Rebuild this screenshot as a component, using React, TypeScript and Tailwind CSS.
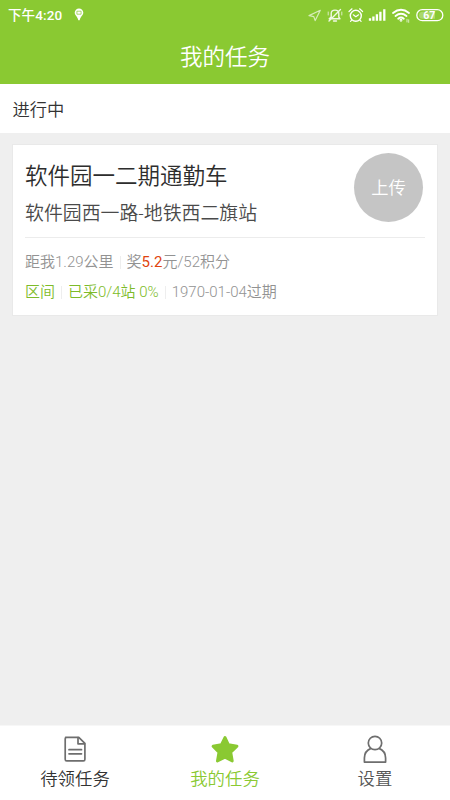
const TABS = [
    { id: "pending", label: "待领任务", color: "text-[#333333]", icon: <DocumentIcon /> },
    { id: "mine", label: "我的任务", color: "text-[#8ac932]", icon: <StarIcon /> },
    { id: "settings", label: "设置", color: "text-[#555555]", icon: <UserIcon /> },
];

function DocumentIcon() {
    return (
        <svg className="w-7 h-7" viewBox="0 0 28 28" fill="none" stroke="#6e6e6e" strokeWidth="1.7" strokeLinejoin="round" strokeLinecap="round">
            <path d="M4.6 2.3H17.8L23.9 8.4V24.2Q23.9 25.9 22.4 25.9H5.7Q4.2 25.9 4.2 24.2V3.8Q4.2 2.3 5.7 2.3" />
            <path d="M17 2.5V8.8H23.5M8 14.7H20.5M8 18.8H20.5" />
        </svg>
    );
}

function StarIcon() {
    return (
        <svg className="w-7 h-7" viewBox="0 0 28 28" fill="#8ac932" stroke="#8ac932" strokeWidth="2.8" strokeLinejoin="round">
            <path d="M14 2.4L17.4 9.6L26 11.2L19.8 17.2L21.3 26L14 22.2L6.4 26L7.9 17.2L2 11.2L10.4 9.6Z" />
        </svg>
    );
}

function UserIcon() {
    return (
        <svg className="w-7 h-7" viewBox="0 0 28 28" fill="none" stroke="#6e6e6e" strokeWidth="1.7" strokeLinejoin="round">
            <circle cx="14" cy="8" r="6.7" />
            <path d="M10 13.4C6 15 3.4 18.4 3.4 23V27.1H24.6V23C24.6 18.4 22 15 18 13.4" />
        </svg>
    );
}

function StatusBar() {
    return (
        <div className="h-[30px] flex items-center text-white">
            <span className="ml-2 w-[56px] text-[13.5px] leading-[30px] font-medium tracking-[0.1px] whitespace-nowrap">下午4:20</span>
            <svg className="ml-[9px] w-3 h-[14px]" viewBox="0 0 12 14" fill="white">
                <path d="M6 0.5A4.3 4.3 0 0 0 1.7 4.8C1.7 7.1 4.8 9 5.3 12.2H6.7C7.2 9 10.3 7.1 10.3 4.8A4.3 4.3 0 0 0 6 0.5Z" />
                <path d="M3.9 3.2H8.1V6.2H3.9Z" fill="none" stroke="#8ac932" strokeWidth="0.7" />
            </svg>
            <svg className="ml-auto w-[142px] h-[30px]" viewBox="308 0 142 30" fill="none" stroke="white" strokeWidth="1.2" strokeLinecap="round" strokeLinejoin="round">
                <path d="M309 15.6L320.3 10.3L315.2 20.6L313.8 16.6Z" opacity="0.65" />
                <g opacity="0.88">
                    <path d="M329.2 18.8H340L338.8 17V13.5C338.8 9 331.2 9 331.2 13.5V17Z M333.5 21H336.5M329 21L340.5 9.5" strokeWidth="1.4" />
                    <path d="M328.2 12V15M341.8 12V15" strokeWidth="0.8" />
                </g>
                <g>
                    <circle cx="355.8" cy="15.8" r="5.5" strokeWidth="1.4" />
                    <path d="M349 11.5L352 8.8M362.6 11.5L359.6 8.8M353.3 14.8L355.8 16.7L358.6 14.8M351.5 20.3L350.5 21.4M360.1 20.3L361.1 21.4" />
                </g>
                <path d="M370 18.3V20.8M373.4 16.5V20.8M376.9 14.2V20.8M380.4 11.8V20.8M384.3 9.3V20.8" strokeWidth="2.3" strokeLinecap="butt" />
                <g strokeWidth="1.9">
                    <path d="M393 12.9Q401 6.4 409 12.9M395.5 16Q401 11.7 406.5 16M398.2 18.7Q401 16.5 403.8 18.7" />
                    <circle cx="401" cy="20.2" r="0.5" />
                </g>
                <path d="M407 19.3V22M408.7 19.8V22.4" strokeWidth="0.9" opacity="0.75" />
                <rect x="416.8" y="9.7" width="26" height="11" rx="5.5" strokeWidth="1.3" />
                <path d="M419 15.2A3.5 3.5 0 0 1 422.5 11.7H435V18.7H422.5A3.5 3.5 0 0 1 419 15.2Z" fill="white" stroke="none" opacity="0.28" />
                <text x="429.3" y="18.9" fill="white" stroke="none" textAnchor="middle" fontSize="10.5" fontWeight="700">67</text>
            </svg>
        </div>
    );
}

function Divider() {
    return <span className="w-px h-[13px] mx-[6px] bg-[#eeeeee]" />;
}

function TaskCard() {
    return (
        <div className="mx-3 mt-[11px] h-[172px] bg-white border border-[#e9e9e9] px-3 pt-2">
            <div className="flex justify-between h-[84px]">
                <div className="pt-px whitespace-nowrap">
                    <h2 className="h-[38px] text-[22.5px] leading-[44px] text-[#2d2d2d] font-[350]">软件园一二期通勤车</h2>
                    <p className="h-[44px] text-[18.9px] leading-[44px] text-[#4a4a4a]">软件园西一路-地铁西二旗站</p>
                </div>
                <button className="w-[69px] h-[69px] mr-[2px] pt-[2px] rounded-full bg-[#c5c5c5] text-white text-[17.3px]">上传</button>
            </div>
            <div className="h-px bg-[#ececec]" />
            <div className="pt-[9px] text-[15px] text-[#929292] whitespace-nowrap">
                <div className="h-[30px] flex items-center">
                    <span>距我1.29公里</span>
                    <Divider />
                    <span>奖<span className="text-[#e0450f] font-normal">5.2</span>元/52积分</span>
                </div>
                <div className="h-[30px] flex items-center">
                    <span className="text-[#7dbb29]">区间</span>
                    <Divider />
                    <span className="text-[#7dbb29]">已采0/4站 0%</span>
                    <Divider />
                    <span>1970-01-04过期</span>
                </div>
            </div>
        </div>
    );
}

export default function App() {
    return (
        <div className="h-screen flex flex-col bg-[#efefef] font-[350] font-['Roboto','Noto_Sans_CJK_SC',sans-serif]">
            <header className="h-[84px] bg-[#8ac932] text-white">
                <StatusBar />
                <h1 className="h-[54px] text-center text-[22.5px] leading-[55px] font-[350]">我的任务</h1>
            </header>
            <div className="h-[49px] px-[12.5px] bg-white text-[17.3px] leading-[52px] text-[#333333]">进行中</div>

            <main className="flex-1">
                <TaskCard />
            </main>

            <nav className="h-[75px] flex bg-white border-t border-[#f7f7f7]">
                {TABS.map((tab) => (
                    <button key={tab.id} className={`flex-1 flex flex-col items-center pt-[9px] ${tab.color}`}>
                        {tab.icon}
                        <span className="mt-[3px] text-[17.4px] leading-[26px]">{tab.label}</span>
                    </button>
                ))}
            </nav>
        </div>
    );
}
